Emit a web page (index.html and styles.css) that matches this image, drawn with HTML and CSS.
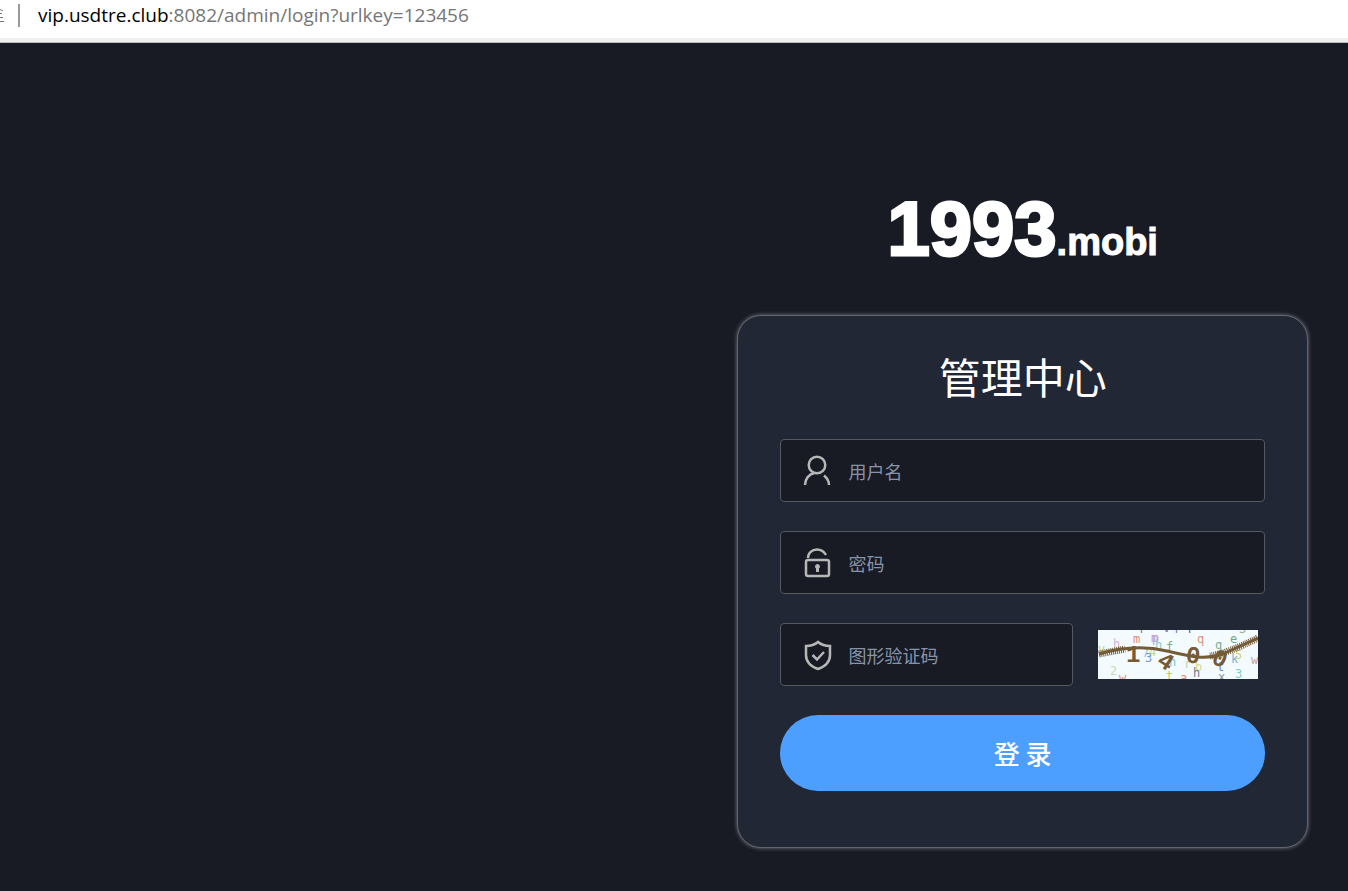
FILE: index.html
```html
<!DOCTYPE html>
<html lang="zh-CN">
<head>
<meta charset="utf-8">
<meta name="viewport" content="width=device-width, initial-scale=1">
<title>管理中心</title>
<link rel="stylesheet" href="styles.css">
</head>
<body>
<header class="address-bar">
  <svg class="security" width="4" height="20" viewBox="0 0 4 20" aria-hidden="true"><path d="M0 5.5l3 1.500M0 9.500h2M0 13.500h3M0 17.500h4"/></svg>
  <span class="divider"></span>
  <span class="url"><span class="host">vip.usdtre.club</span>:8082/admin/login?urlkey=123456</span>
</header>
<main class="page">
  <section class="login">
    <div class="logo"><span class="logo-year">1993</span><span class="logo-domain">.mobi</span></div>
    <form class="card">
      <h1 class="title">管理中心</h1>
      <label class="field">
        <svg class="icon" viewBox="0 0 32 32" aria-hidden="true"><circle cx="16" cy="10" r="8.300"/><path d="M4 30C4 24 8 19 13.500 18M23 20.500C26 23 28 26 28 30"/></svg>
        <input class="input" type="text" placeholder="用户名" aria-label="用户名">
      </label>
      <label class="field">
        <svg class="icon" viewBox="0 0 32 32" aria-hidden="true"><rect x="5" y="13" width="23" height="16" rx="2"/><path d="M7 11C7 6 11 2.500 16 2.500C20 2.500 23 4.500 25 8"/><path class="solid" d="M16.500 17a2.500 2.500 0 0 1 1.500 4.500V25h-3v-3.500a2.500 2.500 0 0 1 1.500-4.500z"/></svg>
        <input class="input" type="password" placeholder="密码" aria-label="密码">
      </label>
      <div class="code-row">
        <label class="field">
          <svg class="icon" viewBox="0 0 32 32" aria-hidden="true"><path d="M17 3C20 5.500 24 7 29 7V16C29 23 24 27.500 17 30C10 27.500 5 23 5 16V7C10 7 14 5.500 17 3Z"/><path d="M11.500 16l4.500 4.500 7-7.500"/></svg>
          <input class="input" type="text" placeholder="图形验证码" aria-label="图形验证码">
        </label>
        <svg class="captcha" width="160" height="49" viewBox="0 0 160 49" role="img" aria-label="验证码">
          <rect width="160" height="49" fill="#f3fbff"/>
          <g class="noise">
            <text x="15" y="18" fill="#d6b5cf">h</text><text x="35" y="13" fill="#dc907b">m</text>
            <text x="53" y="12" fill="#b79bd1">m</text><text x="54" y="12" fill="#c8a2cc">p</text>
            <text x="57" y="19" fill="#8dc9ca">h</text><text x="68" y="21" fill="#85a980">f</text>
            <text x="40" y="3" fill="#777">f</text><text x="65" y="2" fill="#6576b9">v</text>
            <text x="75" y="3" fill="#7677b5">f</text><text x="88" y="3" fill="#5969b8">Y</text>
            <text x="99" y="13" fill="#e09377">q</text><text x="117" y="19" fill="#7bb196">q</text>
            <text x="132" y="13" fill="#75a684">e</text><text x="141" y="3" fill="#a9aa88">3</text>
            <text x="44" y="27" fill="#8bd0d8">7</text><text x="51" y="26" fill="#c8d878">4</text>
            <text x="47" y="32" fill="#7293cd">3</text><text x="12" y="45" fill="#c5ddb0">2</text>
            <text x="21" y="52" fill="#dd9074">w</text><text x="68" y="50" fill="#bdce67">t</text>
            <text x="82" y="52" fill="#e48973">a</text><text x="86" y="38" fill="#b9d8bb">r</text>
            <text x="97" y="41" fill="#d3da8c">b</text><text x="95" y="47" fill="#777c91">h</text>
            <text x="119" y="41" fill="#6784bd">t</text><text x="120" y="51" fill="#779798">x</text>
            <text x="137" y="48" fill="#80c9c2">3</text><text x="133" y="33" fill="#70b9ce">k</text>
            <text x="137" y="29" fill="#cdd770">5</text><text x="153" y="34" fill="#c5a09d">w</text>
            <text x="71" y="36" fill="#84c5cd">h</text><text x="0" y="23" fill="#c5d37a">v</text>
          </g>
          <g class="digits"><text x="28" y="32">1</text><text x="60" y="38" transform="rotate(32 66 32)">4</text><text x="88" y="33" transform="rotate(8 94 26)">0</text><text x="114" y="36" transform="rotate(23 121 30)">0</text></g>
          <path class="strand" d="M1 24C24 17 48 16 69 21C90 26 108 31 127 23L160 8"/>
          <path class="strand-hatch" d="M1 24L27 19M112 26Q128 24 160 8"/>
        </svg>
      </div>
      <button class="submit" type="button">登 录</button>
    </form>
  </section>
</main>
</body>
</html>
```

FILE: styles.css
```css
* { box-sizing: border-box; }
body {
  margin: 0;
  min-height: 100vh;
  display: flex;
  flex-direction: column;
  background: #181a24;
  font-family: "Noto Sans", "Noto Sans CJK SC", sans-serif;
}
.address-bar {
  display: flex;
  align-items: flex-start;
  height: 43px;
  padding-top: 4px;
  background: #fff;
  border-bottom: 1px solid #b5bcb8;
  box-shadow: inset 0 -4px #f0f0f0;
  color: #767676;
}
.security { flex: none; fill: none; stroke: #777; }
.divider { width: 2px; height: 23px; margin: 0 18px 0 14px; background: #999; }
.url {
  font-family: "Open Sans", sans-serif;
  font-size: 19px;
  line-height: 22px;
  white-space: nowrap;
}
.host { color: #000; }
.page {
  flex: 1;
  display: flex;
  justify-content: flex-end;
  padding: 144px 40px 42px;
}
.login {
  width: 45%;
  min-width: 480px;
  display: flex;
  flex-direction: column;
}
.logo {
  display: flex;
  align-items: baseline;
  justify-content: center;
  height: 128px;
  font-family: "Liberation Sans Narrow", "Liberation Sans", sans-serif;
  font-weight: 700;
  line-height: 84px;
  color: #fff;
}
.logo-year { font-size: 76px; -webkit-text-stroke: 3px #fff; }
.logo-domain { font-size: 38px; -webkit-text-stroke: 1px #fff; }
.card {
  padding: 30px 42px 56px;
  border: 1px solid #62656e;
  border-radius: 24px;
  background: #212735;
  box-shadow: 0 0 4px #77777c;
}
.title {
  margin: 0 0 29px;
  color: #fff;
  font-size: 42px;
  font-weight: 400;
  line-height: 64px;
  text-align: center;
}
.field {
  display: flex;
  align-items: center;
  height: 63px;
  margin-bottom: 29px;
  padding: 0 20px;
  border: 1px solid #555861;
  border-radius: 4px;
  background: #181a24;
}
.icon {
  flex: none;
  width: 32px;
  height: 32px;
  fill: none;
  stroke: #b7b7b8;
  stroke-width: 2.5;
}
.icon .solid { fill: #b7b7b8; stroke: none; }
.input {
  flex: 1;
  min-width: 0;
  margin-left: 15px;
  padding: 0;
  border: 0;
  outline: 0;
  background: transparent;
  color: #fff;
  font: 18px/28px "Noto Sans CJK SC", sans-serif;
}
.input::placeholder { color: #8793aa; opacity: 1; }
.code-row { display: flex; align-items: flex-start; }
.code-row .field { flex: 1; }
.captcha { flex: none; margin: 7px 7px 0 25px; }
.noise { font: 12px "DejaVu Sans Mono", monospace; }
.digits {
  font: 700 24px "Liberation Mono", monospace;
  fill: #765a36;
}
.strand { fill: none; stroke: #745c37; stroke-width: 3; }
.strand-hatch {
  fill: none;
  stroke: #745c37;
  stroke-width: 7;
  stroke-dasharray: 1 1;
}
.submit {
  display: block;
  width: 100%;
  height: 76px;
  border: 0;
  border-radius: 38px;
  background: #4d9fff;
  color: #fff;
  font: 500 26px/38px "Noto Sans CJK SC", sans-serif;
}
```
